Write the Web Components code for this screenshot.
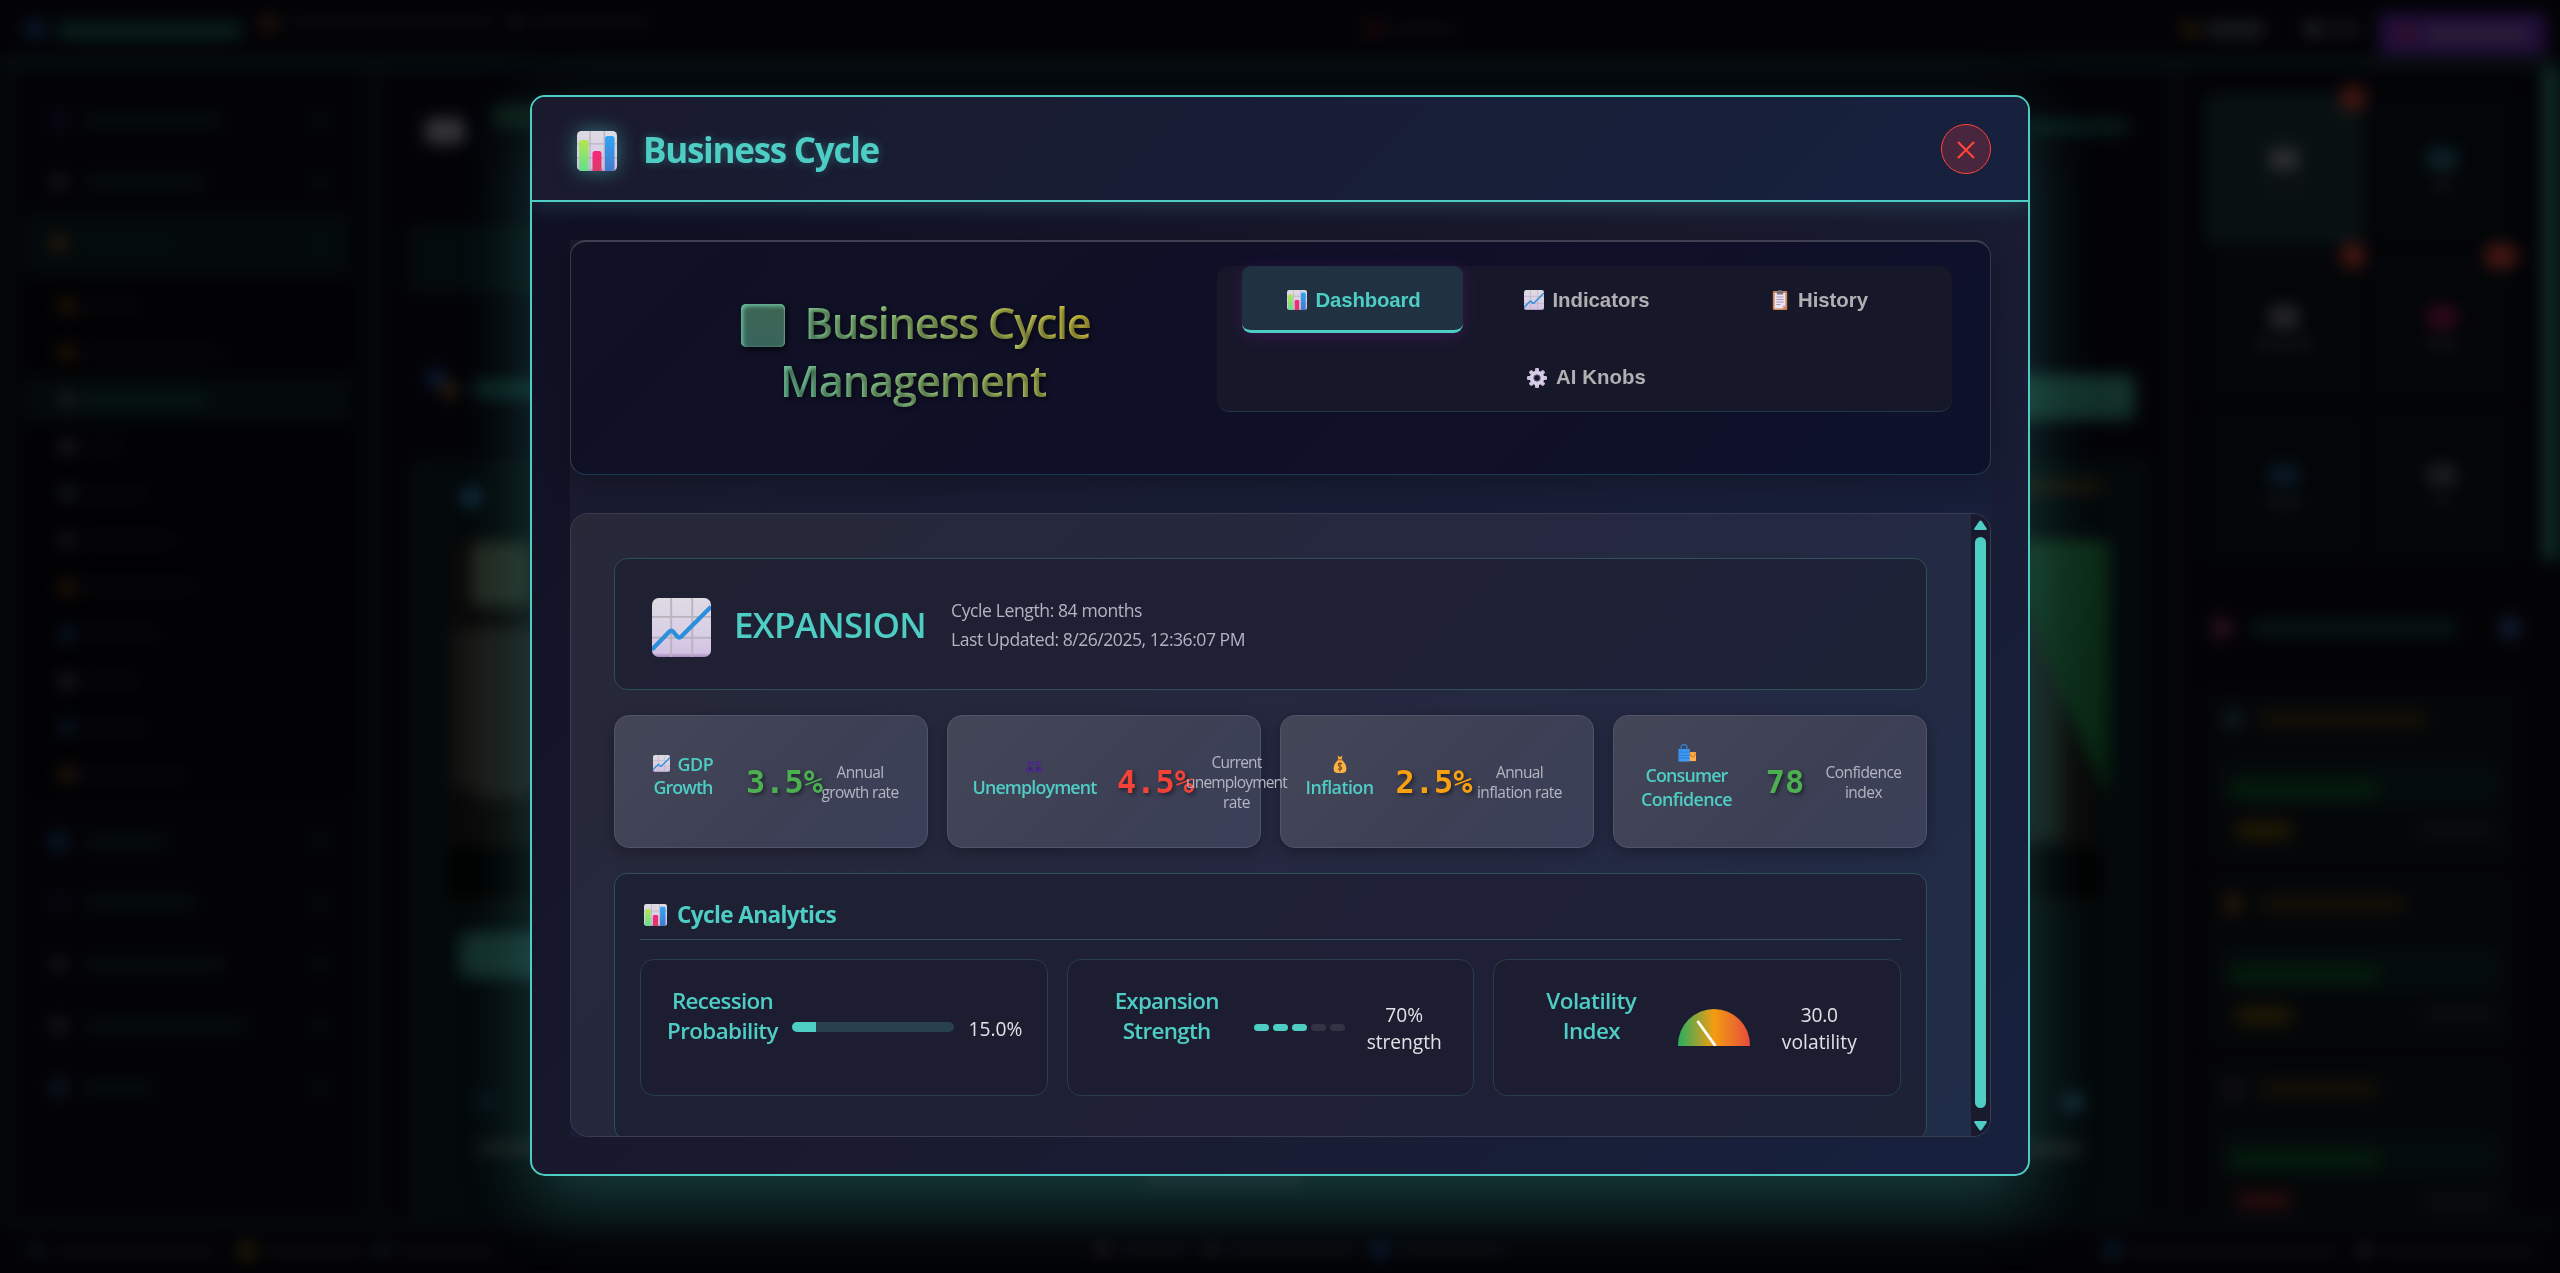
<!DOCTYPE html>
<html lang="en">
<head>
<meta charset="utf-8">
<title>Business Cycle</title>
<style>
html,body{margin:0;height:100%;background:#030307;overflow:hidden}
body{font-family:"Open Sans","Noto Sans",sans-serif;color:#e0e0e0}
</style>
</head>
<body>
<game-shell></game-shell>
<modal-overlay>
  <cycle-modal>
    <cycle-header></cycle-header>
    <cycle-scroll>
      <phase-card></phase-card>
      <metric-row></metric-row>
      <cycle-analytics></cycle-analytics>
    </cycle-scroll>
  </cycle-modal>
</modal-overlay>
<script>
const def = (name, html, after) => customElements.define(name, class extends HTMLElement {
  connectedCallback() {
    if (this.shadowRoot) return;
    this.attachShadow({ mode: 'open' }).innerHTML = typeof html === 'function' ? html(this) : html;
    if (after) after(this);
  }
});

const PAPER = `<defs><linearGradient id="p" x1="0" y1="0" x2="0" y2="1"><stop offset="0" stop-color="#dedbe2"/><stop offset=".6" stop-color="#d9cfe6"/><stop offset=".93" stop-color="#d3c2e2"/><stop offset="1" stop-color="#a58abb"/></linearGradient>
<linearGradient id="g" x1="0" y1="0" x2="0" y2="1"><stop offset="0" stop-color="#b4e64f"/><stop offset="1" stop-color="#62e08e"/></linearGradient>
<linearGradient id="r" x1="0" y1="0" x2="0" y2="1"><stop offset="0" stop-color="#f7257f"/><stop offset="1" stop-color="#da3d68"/></linearGradient>
<linearGradient id="b" x1="0" y1="0" x2="0" y2="1"><stop offset="0" stop-color="#2fa5f5"/><stop offset="1" stop-color="#4479cf"/></linearGradient></defs>
<rect width="40" height="40" rx="4.5" fill="url(#p)"/><path d="M13 0V40M27.3 0V40M0 12.8H40M0 27H40" stroke="#b9b2bf" stroke-width="1.3"/>`;
const ICONS = {
  bars: PAPER + `<path d="M2 12a3 3 0 0 1 3-3h4a2.500 2.500 0 0 1 2.500 2.500V40H5a3 3 0 0 1-3-3z" fill="url(#g)"/><path d="M15.500 22.500a2.500 2.500 0 0 1 2.500-2.500h4a2.500 2.500 0 0 1 2.500 2.500V40h-9z" fill="url(#r)"/><path d="M28 7.500A2.500 2.500 0 0 1 30.500 5H35a2.500 2.500 0 0 1 2.500 2.500V37a3 3 0 0 1-3 3H28z" fill="url(#b)"/>`,
  line: PAPER + `<path d="M0 35 11.500 23Q13 21.500 14.500 23L17 26Q18.500 27.500 20 26L40 6" fill="none" stroke="#2b8fdc" stroke-width="2.900"/>`,
  clip: `<rect x="4" y="2" width="32" height="38" rx="3" fill="#cf8555"/><path d="M8 6h24v25l-6 6H8z" fill="#ebe3f2"/><path d="M32 31l-6 6v-6z" fill="#c3a9d4"/><path d="M13 3h3a4 4 0 0 1 8 0h3v6H13z" fill="#75707f"/><path d="M12 14h16M12 19h16M12 24h16M12 29h9" stroke="#9f90b0" stroke-width="2"/>`,
  gear: `<g fill="#cfc3de">${[0,45,90,135,180,225,270,315].map(a=>`<rect x="16" y="0" width="8" height="11" rx="2.500" transform="rotate(${a} 20 20)"/>`).join('')}</g><circle cx="20" cy="20" r="10.500" fill="none" stroke="#d8cde6" stroke-width="8"/><circle cx="20" cy="20" r="6.500" fill="#17172a" stroke="#8d7fa3" stroke-width="1.500"/>`,
  people: `<g fill="#4b2d80"><circle cx="11.500" cy="13" r="7"/><circle cx="28.500" cy="13" r="7"/><path d="M1 38V30q0-8 8-8h4q6 0 6 8v8zM21 38v-8q0-8 6-8h4q8 0 8 8v8z"/></g><path d="M11 23v8M29 23v8" stroke="#2f1c58" stroke-width="3"/>`,
  bag: `<path d="M14 1l6 4 6-4-2 9h-8z" fill="#f7b53a"/><path d="M15 11h10q11 9 11 19 0 10-11 10H15Q4 40 4 30q0-10 11-19z" fill="#f9b443"/><path d="M14 11h12" stroke="#d9722f" stroke-width="2.500"/><path d="M25 20q-5-3.500-9 0-1 4 4 5.500t4 5q-4 3-9 0M20 16v21" fill="none" stroke="#7a431f" stroke-width="2.600"/>`,
  shop: `<path d="M20 18h20v20H20z" fill="#ffb04a"/><path d="M28 21q0 8 5 8t5-8" fill="none" stroke="#c46a24" stroke-width="2"/><path d="M1 11h25v28H1z" fill="#3e9cf5"/><path d="M1 18h25M1 25h25M1 31h25" stroke="#2b6fd0" stroke-width="1.800"/><path d="M7 15V8q0-6.500 6.500-6.500T20 8v7" fill="none" stroke="#3186d6" stroke-width="2.800"/>`
};
const icon = (n, w, h = w, st = '') => `<svg viewBox="0 0 40 40" width="${w}" height="${h}" preserveAspectRatio="none" style="display:block;flex:none;${st}">${ICONS[n]}</svg>`;
const fit = (w, t) => `<fit-text w="${w}">${t}</fit-text>`;

/* ---------- dimmed application behind the dialog ---------- */
const dot = (c, w = 18, h = 14, st = '') => `<i style="flex:none;background:${c};width:${w}px;height:${h}px;border-radius:6px;${st}"></i>`;
def('side-nav', () => {
  const grp = (c, w, on) => `<div class="g ${on ? 'on' : ''}">${dot(c,17,17)}${dot('#061111',w,11,'margin-left:17px')}<s></s>${dot('#071213',16,10)}</div>`;
  const sub = (c, w, on) => `<div class="s ${on ? 'on' : ''}">${dot(c,18,15)}${dot(on ? '#081c1a' : '#0b0b10',w,10,'margin-left:6px')}</div>`;
  return `<style>:host{display:flex;flex-direction:column;flex:none;width:325px;padding:22px 15px 0 13px;border-left:12px solid #050c0e;border-right:18px solid #04080b}
  .g,.s{display:flex;align-items:center;box-sizing:border-box;flex:none}.g{height:61.5px;padding:0 22px 0 25px}.s{height:46.9px;padding-left:33px}s{flex:1}
  .on{background:#040b0d}.subs{margin:8px 0 12px;background:#010104}</style>
  ${grp('#0f0a1c',138)}${grp('#19191b',122)}${grp('#2b1d0d',88,1)}
  <div class="subs">${sub('#281806',60)}${sub('#281806',142)}${sub('#1e1e22',125,1)}${sub('#1f1f25',42)}${sub('#161c22',66)}${sub('#18181a',94)}${sub('#281806',116)}${sub('#081a2c',78)}${sub('#1d1f20',58)}${sub('#071826',68)}${sub('#2a1c0e',104)}</div>
  ${grp('#0b1f36',84)}${grp('#0b0716',112)}${grp('#17161b',142)}${grp('#1a1a1f',164)}${grp('#0e1a28',70)}`;
});
def('side-widgets', () => {
  const tile = (c, l, on, badge) => `<div class="t ${on ? 'on' : ''}">${dot(c,30,22)}${dot('#131317',l,10,'margin-top:11px')}${badge ? `<b style="width:${badge}px"></b>` : ''}</div>`;
  const task = (c, w, chip, r) => `<div class="c"><div class="r">${dot(c,18,16,'margin-right:18px')}${dot('#1e1608',w,12)}</div><div class="bar"><i></i></div><div class="r">${dot(chip,56,17,'margin-left:12px')}<s></s>${dot('#0e0f12',r,10)}</div></div>`;
  return `<style>:host{display:flex;flex-direction:column;flex:none;box-sizing:border-box;width:372px;padding:25px 0 0 22px;border-left:12px solid #05090c}
  .grid{display:grid;flex:none;grid-template-columns:160px 148px;grid-auto-rows:152px;gap:6px 4px}
  .t{position:relative;display:flex;flex-direction:column;align-items:center;justify-content:center;background:#030609;border-radius:10px}
  .on{background:#091314}.t b{position:absolute;right:-2px;top:-8px;height:26px;border-radius:13px;background:#4b1913}
  .h{display:flex;flex:none;align-items:center;height:60px;margin:37px 0 30px;padding:0 22px 0 8px}s{flex:1}
  .c{width:315px;height:177px;flex:none;box-sizing:border-box;margin-bottom:8px;background:#050709;border-radius:10px;padding:22px 20px 0 20px}
  .r{display:flex;align-items:center;height:18px}.bar{height:42px;margin:36px 0 15px -4px;background:#050e0c;border-radius:8px;display:flex;align-items:center}
  .bar i{height:17px;width:148px;margin:8px 0 0 10px;background:#03200f;border-radius:7px}</style>
  <div class="grid">${tile('#343437',24,1,26)}${tile('#0f272e',24)}${tile('#2b2b2e',64,0,26)}${tile('#38091f',34,0,34)}${tile('#0b1c2a',40)}${tile('#202023',16)}</div>
  <div class="h">${dot('#30151d',20,20)}${dot('#091b19',206,14,'margin-left:19px')}<s></s>${dot('#142138',20,20)}</div>
  ${task('#11232b',166,'#241d05',83)}${task('#33200b',144,'#241d05',78)}${task('#17171c',116,'#2c0c0c',76)}`;
});
def('app-stage', `<style>:host{display:block;flex:1;min-width:0;position:relative;overflow:hidden;background:#030308}i{position:absolute;border-radius:8px}</style>
  ${[['#040a0c',46,390,1720,780],['#07110f',32,392,12,770],['#3b3b40',42,50,40,26],['#0d1f18',108,36,60,24],['#050d0f',26,158,1200,66],['#0f2144',44,302,18,16],['#33220c',58,314,18,16],['#0c2826',90,312,120,18],
   ['#16364a',78,420,20,18],['#0b0a09',66,470,1650,370],['#262e24',88,474,60,64],['#1a1815',70,560,90,160],['#1c1d1b',90,560,60,170],['#000000',66,780,1650,50],['#15332f',76,864,130,46],['#0c1622',92,1026,22,14],['#1c1f20',94,1074,80,12],
   ['#0a211e',1640,52,106,14],['#15362f',1600,306,152,46],['#1e1608',1620,412,102,13],['#161d19',1640,472,40,300],['#1a1a20',760,1106,160,10],['#15303f',1680,1024,20,20],['#1d2021',1640,1074,60,14]]
   .map(([c,x,y,w,h]) => `<i style="background:${c};left:${x}px;top:${y}px;width:${w}px;height:${h}px"></i>`).join('')}
   <i style="left:1640px;top:472px;width:86px;height:260px;background:linear-gradient(125deg,#12351f,#0a2d17 75%,#06240f);clip-path:polygon(0 0,100% 0,100% 100%,60% 72%,0 20%)"></i>`);
def('game-shell', `<style>:host{display:flex;flex-direction:column;position:fixed;inset:0;background:#030307;filter:blur(8px) brightness(.88);overflow:hidden}
  .top{display:flex;align-items:center;height:58px;flex:none;border-bottom:10px solid #081315;padding:0 14px 0 26px}
  .mid{display:flex;flex:1;min-height:0;overflow:hidden}.foot{display:flex;align-items:center;height:45px;flex:none;border-top:10px solid #060b0e;padding:0 24px 0 28px}
  .top>div{display:flex;align-items:center}.buy{background:#241040;height:42px;width:167px;margin:10px 0 0 18px;padding-left:18px;box-sizing:border-box}s{flex:1}.sb{width:18px;height:492px;background:#11302b;flex:none}</style>
  <div class="top"><div style="width:1340px">${dot('#0c1f38',18,18)}${dot('#0a241f',186,17,'margin:3px 0 0 12px')}${dot('#2a1a0b',18,15,'margin:-12px 0 0 18px')}${dot('#0d0d12',205,10,'margin:-14px 0 0 12px')}${dot('#1a1a1d',14,12,'margin:-14px 0 0 14px')}${dot('#0d0d12',120,10,'margin:-14px 0 0 8px')}</div>
   ${dot('#280c0c',16,14)}${dot('#0c0c11',72,10,'margin-left:6px')}<s></s>${dot('#2d1f09',18,13)}${dot('#1d2021',60,15,'margin-left:6px')}${dot('#212324',20,16,'margin-left:38px')}${dot('#141619',34,13,'margin-left:4px')}<div class="buy">${dot('#3f1128',18,16)}${dot('#33233f',104,15,'margin-left:10px')}</div></div>
  <div class="mid"><side-nav></side-nav><app-stage></app-stage><side-widgets></side-widgets><div class="sb"></div></div>
  <div class="foot">${dot('#0c161e',16,13)}${dot('#0f0e13',160,10,'margin-left:12px')}${dot('#292306',18,15,'margin-left:22px')}${dot('#0f0e13',98,10,'margin-left:10px')}${dot('#0c1920',16,13,'margin-left:10px')}${dot('#0f0e13',98,10,'margin-left:10px')}<s></s>${dot('#241919',16,13)}${dot('#0f0e13',70,10,'margin-left:8px')}${dot('#18181e',16,13,'margin-left:14px')}${dot('#0f0e13',130,10,'margin-left:8px')}${dot('#10203c',18,14,'margin-left:14px')}${dot('#0f0e13',110,10,'margin-left:8px')}<s></s>${dot('#071e30',18,15)}${dot('#0f0e13',210,10,'margin-left:8px')}${dot('#1c1c20',18,13,'margin-left:16px')}${dot('#0f0e13',155,10,'margin-left:8px')}</div>`);

/* ---------- dialog ---------- */
def('modal-overlay', `<style>:host{position:fixed;inset:0;display:flex;justify-content:center;align-items:flex-start;padding-top:95px}</style><slot></slot>`);

def('cycle-modal', `<style>
  :host{display:flex;flex-direction:column;box-sizing:border-box;width:1500px;height:1081px;border:2px solid #4ecdc4;border-radius:15px;overflow:hidden;
    background:linear-gradient(135deg,#0f0f23 0%,#1a1a2e 50%,#16213e 100%);box-shadow:0 25px 70px rgba(78,205,196,.27)}
  header{display:flex;align-items:center;box-sizing:border-box;height:105px;flex:none;padding:0 37px 0 45px;border-bottom:2px solid #4ecdc4;
    background:linear-gradient(135deg,#1a1a2e,#16213e);box-shadow:0 4px 20px rgba(78,205,196,.2);position:relative}
  h1{margin:3px auto 0 26px;font-size:35px;line-height:46px;font-weight:700;color:#4ecdc4;text-shadow:0 0 10px rgba(78,205,196,.35)}
  .ic{margin-top:4px;filter:drop-shadow(0 0 10px rgba(78,205,196,.5))}
  button{width:50px;height:50px;box-sizing:border-box;border:1px solid #ff4438;border-radius:50%;background:#48263d;padding:0;display:grid;place-items:center}
  .module{flex:1;min-height:0;box-sizing:border-box;padding:38px 38px 37px;display:flex}
  .inner{flex:1;display:flex;flex-direction:column;gap:38px;background:linear-gradient(135deg,#1a1a2e,#16213e);min-height:0}
  </style>
  <header><div class="ic">${icon('bars',40)}</div><h1>${fit(236,'Business Cycle')}</h1>
  <button aria-label="Close"><svg width="18" height="18" viewBox="0 0 18 18" style="margin-top:2px"><path d="M1 1 17 17M17 1 1 17" stroke="#ff4438" stroke-width="2.300"/></svg></button></header>
  <div class="module"><div class="inner"><slot></slot></div></div>`);

def('cycle-header', `<style>
  :host{display:flex;align-items:flex-start;box-sizing:border-box;height:235px;flex:none;padding:24px 38px 0;border:1px solid #393b4d;border-top:2px solid #403f52;border-bottom-color:#1b3950;border-radius:16px;
    background:linear-gradient(135deg,#111125 0%,#0f0f27 45%,#101028 65%,#0d122b 100%);box-shadow:0 8px 30px rgba(0,0,0,.25)}
  h2{margin:28px 0 0;width:608px;font-weight:600;font-size:43.500px;line-height:58px;color:transparent;background:linear-gradient(60deg,#4ecdc4 8%,#a3cb74 55%,#f9ca24 92%);-webkit-background-clip:text;background-clip:text;text-shadow:2px 2px 4px rgba(0,0,0,.5);text-align:center}
  .l{display:flex;justify-content:center;align-items:center;height:58px}
  .sq{width:44px;height:43px;margin:4px 20px 0 5px;border-radius:5px;background:linear-gradient(25deg,#38635f,#3d6650);box-shadow:inset 2px 2px 4px #6fc3a0,inset -1px 0 1px #5d9a80,2px 3px 5px rgba(0,0,0,.6)}
  nav{display:grid;grid-template-columns:repeat(3,221px);gap:10px 12px;padding:0 23px 0 25px;background:#17172a;border-radius:13px;border-bottom:1px solid #22384a;box-sizing:border-box;width:735px;height:146px}
  nav div{display:flex;align-items:center;justify-content:center;box-sizing:border-box;height:67px;padding:4px 0 0 2px;gap:9px;font:700 20.400px "Liberation Sans",sans-serif;color:#b0b0b2;border-radius:9px;border-bottom:3px solid transparent}
  nav .on{color:#4ecdc4;background:#203141;border-bottom-color:#4ecdc4;box-shadow:0 3px 15px rgba(110,25,130,.38)}
  nav .k{grid-column:2}</style>
  <h2><div class="l"><div class="sq"></div>${fit(286,'Business Cycle')}</div><div class="l">${fit(266,'Management')}</div></h2>
  <nav><div class="on">${icon('bars',20)}${fit(105,'Dashboard')}</div><div>${icon('line',20)}${fit(97,'Indicators')}</div><div>${icon('clip',18,20)}${fit(70,'History')}</div><div class="k">${icon('gear',20)}${fit(90,'AI Knobs')}</div></nav>`);

def('cycle-scroll', `<style>
  :host{display:flex;box-sizing:border-box;flex:1;min-height:0;overflow:hidden;border:1px solid #3a3d50;border-radius:18px;background:linear-gradient(135deg,#272838 0%,#252840 50%,#202d48 100%)}
  .c{flex:1;min-width:0;height:622px;overflow:hidden;display:flex;flex-direction:column;gap:25px;padding:44px 44px 0 43px;box-sizing:border-box}
  .sb{width:19px;flex:none;background:#1a1a2e;display:flex;flex-direction:column;align-items:center;padding:6px 0 5px;box-sizing:border-box}
  .th{flex:1;width:11px;border-radius:6px;background:#4ecdc4;margin:7px 0 13px}</style>
  <div class="c"><slot></slot></div>
  <div class="sb"><svg width="13" height="10"><path d="M5 1.500Q6.500-.5 8 1.500L12.700 8.500Q13 10 12 10H1Q0 10 .3 8.500Z" fill="#4ecdc4"/></svg><div class="th"></div><svg width="13" height="10"><path d="M5 8.500Q6.500 10.500 8 8.500L12.700 1.500Q13 0 12 0H1Q0 0 .3 1.500Z" fill="#4ecdc4"/></svg></div>`);

def('phase-card', `<style>
  :host{display:flex;align-items:center;box-sizing:border-box;height:132px;flex:none;padding-left:37px;border:1px solid #2b5058;border-radius:13px;background:linear-gradient(135deg,#1f2032,#1f2036 60%,#1d2237)}
  h3{margin:2px 0 0 23px;font-size:35px;line-height:46px;font-weight:600;color:#4ecdc4}
  .d{margin:1px 0 0 25px;font-size:17.600px;line-height:29px;color:#b2b4c0}.d div{height:29px}</style>
  ${icon('line',59,59,'margin-top:7px')}<h3>${fit(192,'EXPANSION')}</h3>
  <div class="d"><div>${fit(191,'Cycle Length: 84 months')}</div><div>${fit(294,'Last Updated: 8/26/2025, 12:36:07 PM')}</div></div>`);

def('metric-card', el => `<style>
  :host{display:grid;grid-template-columns:${el.getAttribute('cols')};align-items:center;box-sizing:border-box;width:314px;height:133px;border:1px solid #52556a;border-radius:15px;
    background:linear-gradient(135deg,#444658,#3d4055 60%,#3a4059);box-shadow:0 4px 15px rgba(0,0,0,.3);position:relative}
  .col{display:flex;flex-direction:column;align-items:center;min-width:0;white-space:nowrap}</style>
  <div class="col"><slot name="title"></slot></div><div class="col"><slot name="value"></slot></div><div class="col"><slot name="desc"></slot></div>`);

def('metric-row', () => {
  const t = ls => `<div slot="title" class="t">${ls.map(l => `<div>${l}</div>`).join('')}</div>`;
  const d = ls => `<div slot="desc" class="d">${ls.map(([w, l]) => `<div>${fit(w, l)}</div>`).join('')}</div>`;
  const v = (c, s) => `<div slot="value" class="v" style="color:${c}">${s}</div>`;
  return `<style>:host{display:flex;gap:19px;flex:none}
  .t{font-size:17.900px;font-weight:600;line-height:23.200px;color:#4ecdc4;margin:-11px 0 0 -2px}.t div,.d div{display:flex;justify-content:center;align-items:center}.t div{height:23.200px}
  .d{font-size:15.500px;line-height:20px;color:#b4b6c2}.d div{height:20px}
  .v{font:700 32px/38px "DejaVu Sans Mono",monospace;text-shadow:2px 2px 4px rgba(0,0,0,.5);margin-left:-2px}</style>
  <metric-card cols="138px 65px 84px">${t([icon('line',17,17,'margin:0 8px 1px 0') + fit(36,'GDP'), fit(59,'Growth')])}${v('#4caf50','3.5%')}${d([[47,'Annual'],[77,'growth rate']])}</metric-card>
  <metric-card cols="175px 67px 93px" style="z-index:1">${t([icon('people',18,14,'margin-top:4px'), fit(124,'Unemployment')])}${v('#f44336','4.5%')}${d([[50,'Current'],[101,'unemployment'],[27,'rate']])}</metric-card>
  <metric-card cols="119px 70px 99px">${t([icon('bag',16,18), fit(68,'Inflation')])}${v('#f9a011','2.5%')}${d([[47,'Annual'],[85,'inflation rate']])}</metric-card>
  <metric-card cols="147px 50px 105px">${t([icon('shop',18,18), fit(82,'Consumer'), fit(91,'Confidence')])}${v('#4caf50','78')}${d([[76,'Confidence'],[37,'index']])}</metric-card>`;
});

def('analytic-item', el => `<style>
  :host{display:grid;grid-template-columns:${el.getAttribute('cols')};align-items:center;box-sizing:border-box;height:137px;border:1px solid #263f4a;border-radius:14px;background:#1c1d30}
  .l,.v{display:flex;flex-direction:column;align-items:center;white-space:nowrap;min-width:0}
  .l{font-size:22.400px;line-height:30px;font-weight:600;color:#4ecdc4;margin-top:-23px}.v{font-size:19.200px;line-height:27px;color:#e2e2e6;margin-top:1px}
  .m{display:flex;justify-content:center}</style>
  <div class="l"><slot name="label"></slot></div><div class="m"><slot></slot></div><div class="v"><slot name="value"></slot></div>`);

def('cycle-analytics', () => {
  const two = (slot, ls) => ls.map(([w, l]) => `<div slot="${slot}" class="ln">${fit(w, l)}</div>`).join('');
  return `<style>
  :host{display:block;box-sizing:border-box;height:267px;flex:none;padding:0 25px;border:1px solid #2b5058;border-radius:13px;background:linear-gradient(135deg,#1e2033,#1f2037 60%,#1d2237)}
  h4{display:flex;align-items:center;margin:0 0 19px;box-sizing:border-box;height:66px;padding:17px 0 0 4px;border-bottom:1px solid #2b525a;font-size:22.600px;line-height:30px;font-weight:700;color:#4ecdc4}
  .g{display:grid;grid-template-columns:repeat(3,1fr);gap:19px}.ln{display:flex;justify-content:center}
  .bar{width:162px;height:10px;border-radius:5px;background:#29404d;overflow:hidden;margin-top:-1px}.bar i{display:block;height:10px;width:24px;background:#4ecdc4}
  .seg{display:flex;gap:4px}.seg i{width:15px;height:7px;border-radius:4px;background:#4ecdc4}.seg .o{background:#323345}</style>
  <h4>${icon('bars',23,22,'margin:-1px 10px 0 0')}${fit(159,'Cycle Analytics')}</h4>
  <div class="g">
   <analytic-item cols="139px 162px 83px" style="padding-left:12px">${two('label',[[101,'Recession'],[111,'Probability']])}<div class="bar"><i></i></div>${two('value',[[54,'15.0%']])}</analytic-item>
   <analytic-item cols="176px 90px 119px" style="padding-left:11px">${two('label',[[104,'Expansion'],[88,'Strength']])}<div class="seg"><i></i><i></i><i></i><i class="o"></i><i class="o"></i></div>${two('value',[[38,'70%'],[75,'strength']])}</analytic-item>
   <analytic-item cols="174px 72px 138px" style="padding-left:10px">${two('label',[[90,'Volatility'],[57,'Index']])}
    <svg width="72" height="37" viewBox="0 0 72 37"><defs><linearGradient id="v"><stop offset="0" stop-color="#27ae60"/><stop offset=".5" stop-color="#f39c12"/><stop offset="1" stop-color="#e74c3c"/></linearGradient></defs><path d="M0 37V36A36 36 0 0 1 72 36V37Z" fill="url(#v)"/><path d="M37.500 37 19.500 12" stroke="#fff" stroke-width="2.800"/></svg>${two('value',[[37,'30.0'],[75,'volatility']])}</analytic-item>
  </div>`;
});

/* Sets letter-spacing so that a label takes up the width given in its w attribute. */
def('fit-text', `<style>:host{display:inline-block;white-space:nowrap;flex:none}</style><slot></slot>`, el => {
  const w = +el.getAttribute('w'), n = el.textContent.length;
  el.style.letterSpacing = ((w - el.getBoundingClientRect().width) / n).toFixed(3) + 'px';
});
</script>
</body>
</html>
